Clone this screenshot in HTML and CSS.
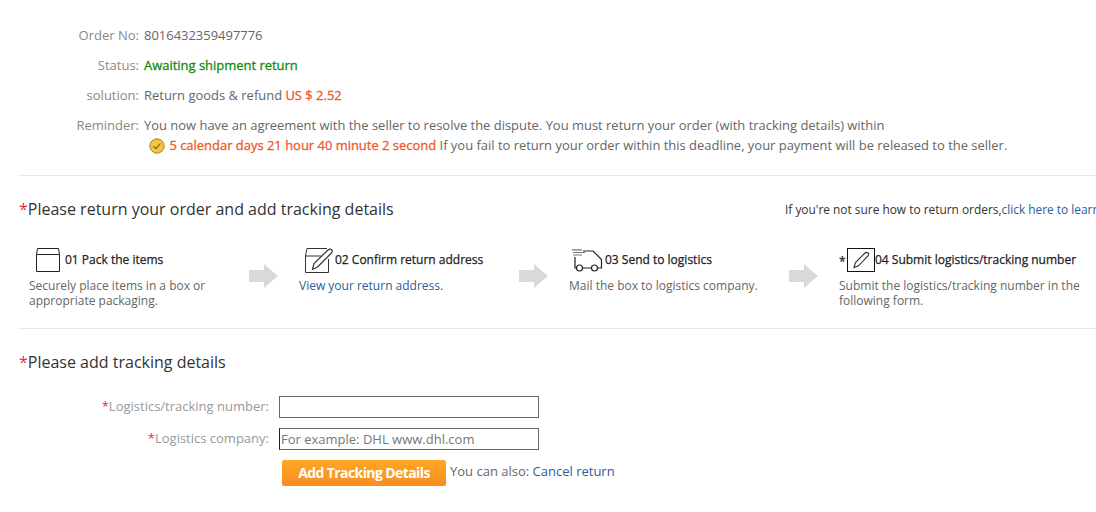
FILE: index.html
```html
<!DOCTYPE html>
<html lang="en">
  <head>
    <meta charset="UTF-8" />
    <title>Return order</title>
    <link rel="stylesheet" href="styles.css">
  </head>
  <body>
    <main class="page">
      <section class="info">
        <div class="info-row">
          <span class="info-label">Order No:</span>
          <div class="info-value">8016432359497776</div>
        </div>
        <div class="info-row">
          <span class="info-label">Status:</span>
          <div class="info-value status">Awaiting shipment return</div>
        </div>
        <div class="info-row">
          <span class="info-label">solution:</span>
          <div class="info-value">Return goods &amp; refund <b class="hot">US $ 2.52</b></div>
        </div>
        <div class="info-row">
          <span class="info-label">Reminder:</span>
          <div class="info-value">
            <div>You now have an agreement with the seller to resolve the dispute. You must return your order (with tracking details) within</div>
            <div class="deadline">
              <svg class="clock" width="16" height="16" viewBox="0 0 16 16">
                <circle cx="8" cy="8" r="7.2" fill="#f5c242" stroke="#a9822a" />
                <path d="M4.5 8.5 7 10.5 11.5 5.5" fill="none" stroke="#6b5218" stroke-width="1.1" />
              </svg>
              <b class="hot">5 calendar days 21 hour 40 minute 2 second</b> If you fail to return your order within this deadline, your payment will be released to the seller.
            </div>
          </div>
        </div>
      </section>

      <section class="return-box">
        <div class="title-row">
          <h2><span class="star">*</span>Please return your order and add tracking details</h2>
          <p class="learn">If you're not sure how to return orders,<a href="#">click here to learn</a></p>
        </div>
        <div class="steps">
          <div class="step">
            <div class="step-head">
              <svg class="icon first" width="24" height="24" viewBox="0 0 24 24" fill="none" stroke="#222">
                <path d="M.5 6.5H23.5V23.5H.5ZM.5 6.5 1.5 .5H22.5L23.5 6.5" />
              </svg>
              <span>01 Pack the items</span>
            </div>
            <p>Securely place items in a box or appropriate packaging.</p>
            <svg class="arrow" width="30" height="24" viewBox="0 0 30 24"><path d="M0 6H15V0L29 12 15 24V18H0Z" fill="#d9d9d9" /></svg>
          </div>
          <div class="step">
            <div class="step-head">
              <svg class="icon second" width="29" height="25" viewBox="0 0 29 25" fill="none" stroke="#333">
                <path d="M23.5 11V24.5H.5V8M.5 8 2 .5H22M.5 8H16" />
                <path d="M7.5 21.5 9 15.5 23 2Q25 .5 26.5 1.8T26.5 5L12.5 19Z" fill="#fff" stroke-width="1.2" />
              </svg>
              <span>02 Confirm return address</span>
            </div>
            <p><a href="#">View your return address.</a></p>
            <svg class="arrow" width="30" height="24" viewBox="0 0 30 24"><path d="M0 6H15V0L29 12 15 24V18H0Z" fill="#d9d9d9" /></svg>
          </div>
          <div class="step">
            <div class="step-head">
              <svg class="icon third" width="31" height="23" viewBox="0 0 31 23" fill="none" stroke="#222" stroke-width="1.2">
                <path d="M0 .8H10M1 3.5H13M1 6H10" stroke="#777" />
                <path d="M11 2H21L29.5 10.5V19H25.5M3 8V19H4.5M10.5 19H19.5" />
                <circle cx="7.5" cy="19" r="3" />
                <circle cx="22.5" cy="19" r="3" />
              </svg>
              <span>03 Send to logistics</span>
            </div>
            <p>Mail the box to logistics company.</p>
            <svg class="arrow" width="30" height="24" viewBox="0 0 30 24"><path d="M0 6H15V0L29 12 15 24V18H0Z" fill="#d9d9d9" /></svg>
          </div>
          <div class="step">
            <div class="step-head">
              <span class="bullet">*</span>
              <span class="icon-box">
                <svg width="18" height="18" viewBox="0 0 18 18" fill="none" stroke="#333" stroke-width="1.1">
                  <path d="M2 16.5 3.5 11.5 13 2Q14.5 .8 16 2T16 5L6.5 14.8Z" />
                </svg>
              </span>
              <span>04 Submit logistics/tracking number</span>
            </div>
            <p>Submit the logistics/tracking number in the following form.</p>
          </div>
        </div>
      </section>

      <section class="track-box">
        <h2><span class="star">*</span>Please add tracking details</h2>
        <form class="track-form">
          <div class="form-row">
            <label><span class="star">*</span>Logistics/tracking number:</label>
            <input type="text" />
          </div>
          <div class="form-row">
            <label><span class="star">*</span>Logistics company:</label>
            <input class="focused" type="text" placeholder="For example: DHL www.dhl.com" />
          </div>
          <div class="form-actions">
            <button type="button">Add Tracking Details</button>
            <span>You can also: <a href="#">Cancel return</a></span>
          </div>
        </form>
      </section>
    </main>
  </body>
</html>
```

FILE: styles.css
```css
* {
  box-sizing: border-box;
}
html,
body {
  margin: 0;
  height: 512px;
  overflow: hidden;
  background: #fff;
}
body {
  font-family: "Open Sans", sans-serif;
  font-size: 13px;
  line-height: 20px;
  color: #666;
}
a {
  color: #2a5d9c;
  text-decoration: none;
}
h2 {
  margin: 0;
  font-size: 16px;
  font-weight: 400;
  line-height: 24px;
  color: #333;
}
.page {
  width: 1200px;
  margin-left: 18px;
  padding-top: 25px;
}
.star {
  color: #d8343a;
}
.hot {
  color: #f2572b;
  font-weight: 500;
  -webkit-text-stroke: 0.3px #f2572b;
}

.info {
  height: 151px;
  border-bottom: 1px solid #e8e8e8;
}
.info-row {
  display: flex;
  margin-bottom: 10px;
}
.info-label {
  width: 121px;
  text-align: right;
  color: #888;
}
.info-value {
  margin-left: 5px;
  font-size: 12.96px;
}
.status {
  color: #118a11;
  font-weight: 500;
  -webkit-text-stroke: 0.3px #118a11;
}
.deadline {
  margin-left: 5px;
}
.clock {
  margin-right: 1px;
  vertical-align: -4px;
}

.return-box {
  height: 153px;
  border-bottom: 1px solid #e8e8e8;
  padding-top: 21px;
}
.title-row {
  display: flex;
  align-items: center;
}
.title-row h2 {
  margin-left: 1px;
  width: 766px;
}
.learn {
  margin: 0;
  white-space: nowrap;
  color: #333;
  font-size: 11.9px;
}
.steps {
  display: flex;
  margin-top: 27px;
  padding-left: 11px;
}
.step {
  position: relative;
  width: 270px;
  padding-right: 20px;
}
.step p {
  margin: 6px 0 0;
  line-height: 15px;
  font-size: 12px;
  width: 245px;
}
.step-head {
  display: flex;
  align-items: center;
  height: 24px;
  color: #222;
  font-weight: 500;
  font-size: 12px;
  white-space: nowrap;
  -webkit-text-stroke: 0.25px #222;
}
.icon {
  flex: none;
}
.first {
  margin: 0 5px 0 7px;
}
.second {
  margin: 0 1px 0 6px;
}
.third {
  margin: 0 2px 0 3px;
}
.bullet {
  width: 8px;
  padding-top: 4px;
}
.icon-box {
  display: flex;
  align-items: center;
  justify-content: center;
  width: 28px;
  height: 24px;
  border: 1px solid #111;
}
.arrow {
  position: absolute;
  left: 220px;
  top: 16px;
}

.track-box {
  padding-top: 21px;
}
.track-box h2 {
  margin-left: 1px;
}
.track-form {
  margin-top: 22px;
}
.form-row {
  display: flex;
  align-items: center;
  height: 22px;
  margin-bottom: 10px;
}
.form-row label {
  width: 251px;
  padding-bottom: 3px;
  text-align: right;
  color: #999;
}
.form-row input {
  width: 260px;
  height: 22px;
  margin-left: 10px;
  padding: 0 1px;
  border: 1px solid #666;
  font: inherit;
  color: #666;
  outline: none;
}
.form-row input::placeholder {
  color: #777;
}
.form-row .focused {
  border-left-color: #222;
}
.form-actions {
  display: flex;
  align-items: flex-start;
  margin-left: 264px;
}
.form-actions button {
  width: 164px;
  height: 26px;
  padding: 0;
  border: 0;
  border-radius: 2px;
  background: linear-gradient(#ffa726, #f98d1e);
  color: #fff;
  font: inherit;
  font-size: 14px;
  font-weight: 700;
  letter-spacing: -0.6px;
  cursor: pointer;
}
.form-actions span {
  margin-left: 4px;
  line-height: 22px;
}
```
